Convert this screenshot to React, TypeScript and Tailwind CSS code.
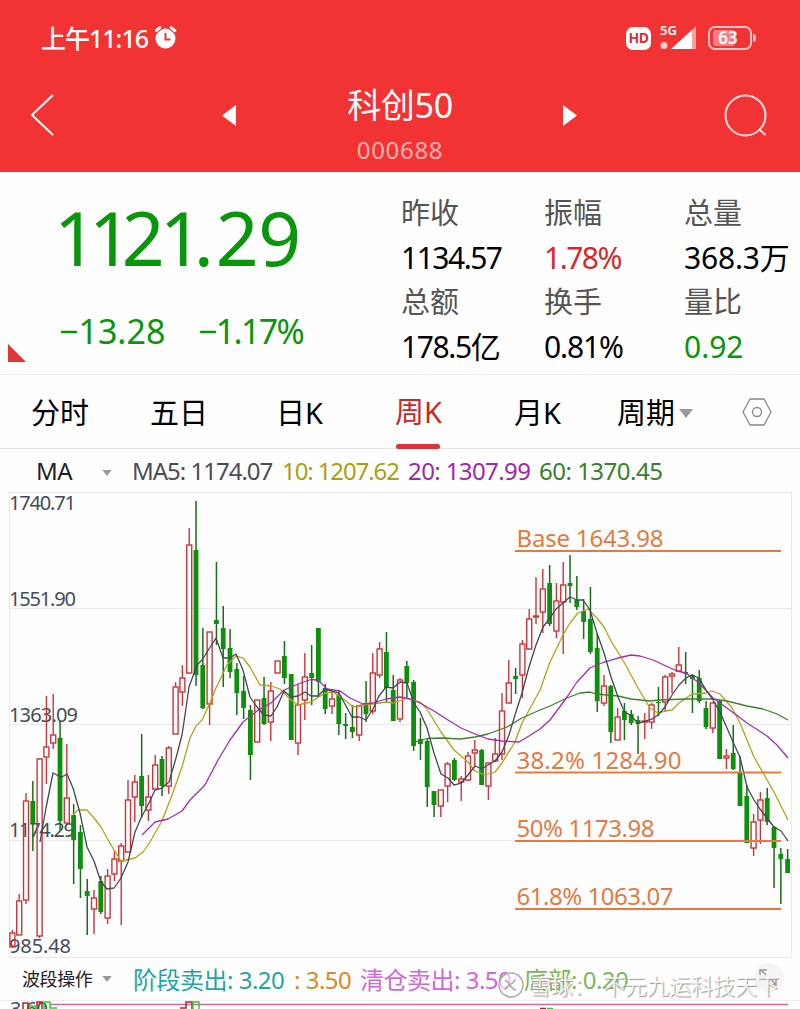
import React from "react";

type Candle = [kind: "r" | "g", high: number, top: number, bottom: number, low: number];

const STEP = 6.8;
const START_X = 12.4;

const candles: Candle[] = [
  ["r", 930, 933, 947, 947],
  ["r", 894, 901, 935, 935],
  ["r", 793, 801, 900, 904],
  ["g", 781, 801, 823, 851],
  ["r", 758, 759, 936, 938],
  ["r", 696, 747, 757, 784],
  ["r", 694, 735, 743, 749],
  ["g", 721, 738, 821, 831],
  ["r", 744, 798, 823, 823],
  ["g", 804, 815, 840, 884],
  ["g", 825, 832, 869, 898],
  ["g", 879, 891, 896, 935],
  ["r", 890, 898, 909, 934],
  ["g", 876, 881, 912, 914],
  ["r", 869, 876, 918, 924],
  ["r", 851, 859, 874, 881],
  ["r", 843, 846, 861, 925],
  ["r", 780, 800, 852, 852],
  ["r", 775, 782, 797, 822],
  ["g", 734, 776, 806, 818],
  ["r", 775, 797, 810, 821],
  ["r", 755, 765, 789, 789],
  ["g", 756, 759, 786, 796],
  ["r", 746, 748, 786, 794],
  ["r", 682, 687, 734, 734],
  ["r", 665, 678, 692, 706],
  ["r", 528, 545, 673, 673],
  ["g", 501, 550, 675, 686],
  ["g", 628, 665, 708, 709],
  ["r", 632, 632, 704, 725],
  ["g", 562, 620, 624, 645],
  ["g", 606, 628, 649, 687],
  ["g", 629, 648, 672, 678],
  ["g", 663, 669, 693, 715],
  ["g", 676, 691, 708, 719],
  ["g", 705, 710, 755, 780],
  ["r", 700, 700, 742, 742],
  ["g", 677, 698, 724, 725],
  ["r", 682, 691, 722, 741],
  ["r", 661, 661, 673, 673],
  ["g", 641, 656, 678, 684],
  ["g", 674, 674, 740, 740],
  ["r", 684, 705, 743, 755],
  ["r", 653, 677, 700, 720],
  ["g", 645, 673, 678, 705],
  ["g", 628, 628, 682, 697],
  ["g", 684, 688, 709, 714],
  ["r", 692, 699, 706, 714],
  ["g", 690, 695, 724, 735],
  ["g", 713, 724, 726, 739],
  ["g", 705, 727, 732, 738],
  ["r", 705, 706, 735, 741],
  ["g", 681, 703, 714, 722],
  ["r", 653, 673, 711, 714],
  ["r", 642, 649, 675, 678],
  ["g", 632, 652, 688, 702],
  ["g", 675, 690, 721, 721],
  ["r", 678, 680, 719, 722],
  ["g", 661, 666, 683, 698],
  ["g", 680, 682, 746, 751],
  ["g", 718, 739, 744, 760],
  ["g", 739, 741, 787, 807],
  ["g", 791, 791, 805, 817],
  ["r", 790, 790, 806, 817],
  ["r", 762, 764, 786, 802],
  ["g", 758, 760, 780, 781],
  ["r", 776, 779, 782, 801],
  ["r", 752, 756, 780, 781],
  ["r", 740, 750, 753, 766],
  ["g", 749, 750, 785, 785],
  ["r", 763, 763, 786, 800],
  ["r", 738, 754, 761, 762],
  ["r", 693, 711, 754, 760],
  ["r", 660, 683, 703, 703],
  ["g", 668, 676, 679, 694],
  ["r", 640, 644, 675, 698],
  ["r", 609, 619, 649, 650],
  ["r", 577, 616, 617, 624],
  ["r", 569, 589, 612, 633],
  ["g", 565, 583, 624, 626],
  ["r", 583, 601, 631, 638],
  ["r", 562, 585, 602, 654],
  ["g", 555, 583, 586, 603],
  ["g", 576, 600, 607, 610],
  ["g", 599, 611, 622, 639],
  ["g", 587, 619, 652, 654],
  ["g", 633, 648, 701, 712],
  ["r", 675, 686, 703, 706],
  ["g", 685, 686, 732, 743],
  ["r", 708, 717, 740, 740],
  ["g", 703, 711, 720, 740],
  ["g", 710, 714, 723, 725],
  ["g", 716, 720, 724, 754],
  ["r", 713, 721, 722, 739],
  ["r", 703, 705, 722, 729],
  ["g", 687, 702, 703, 716],
  ["r", 675, 677, 702, 712],
  ["r", 672, 674, 676, 693],
  ["r", 647, 665, 671, 671],
  ["g", 652, 672, 674, 684],
  ["g", 674, 675, 679, 713],
  ["g", 670, 678, 701, 703],
  ["g", 701, 708, 727, 729],
  ["r", 702, 703, 728, 733],
  ["g", 700, 701, 759, 759],
  ["r", 749, 756, 758, 769],
  ["g", 725, 753, 769, 770],
  ["g", 756, 772, 806, 806],
  ["g", 785, 796, 843, 843],
  ["r", 814, 822, 848, 856],
  ["r", 792, 800, 820, 844],
  ["g", 788, 798, 822, 825],
  ["g", 826, 827, 848, 888],
  ["g", 848, 854, 859, 904],
  ["g", 849, 859, 873, 873],
];

const averages = [
  {
    color: "#b4a21c",
    points:
      "73,815 78,810 87,810 94,818 101,827 107,838 114,850 121,861 135,858 143,852 150,842 162,821 172,795 182,767 190,738 196,726 202,720 209,705 216,688 227,665 236,656 243,658 250,667 260,685 271,686 280,689 291,700 298,705 311,702 325,693 333,692 345,700 353,707 360,705 373,704 386,702 393,703 407,698 420,702 427,709 441,732 454,750 468,762 475,771 485,775 495,772 502,763 515,742 522,723 540,690 550,662 563,635 570,623 578,613 588,609 597,618 604,627 611,641 624,662 638,688 650,708 658,713 665,711 672,710 679,703 692,694 706,693 712,691 720,694 732,708 740,723 754,757 774,792 788,820",
  },
  {
    color: "#3c8030",
    points:
      "415,742 427,738.5 443,738 460,739 475,737 488,734 507,727 522,718 540,710 550,706 567,698 580,693 590,692 597,694 618,696 631,699 650,701 660,700 686,699 713,699 727,701 747,706 763,709 777,714 788,720",
  },
  {
    color: "#a92bb0",
    points:
      "142,835 155,822 168,819 182,811 190,800 200,790 205,785 218,760 230,740 243,722 257,711 271,703 284,690 298,684 311,679.5 318,680 327,689 340,691 350,698 363,704 373,703 386,699 400,697 410,699 420,703 434,711 448,720 461,728 475,734 488,739 502,741 519,742 529,736 540,729 550,720 556,712 567,697 577,682 590,668 604,662 618,658 631,655 640,656 653,660 677,671 686,673 699,683 713,698 727,708 747,723 767,736 777,745 788,758",
  },
  {
    color: "#414957",
    points:
      "40,842 46,808 53,773 56,774.5 61,777.5 67,774 73,788 80,813 87,847 94,861 101,882 107,889 114,888 121,878 128,862 135,832 141,818 148,805 155,790 162,788 169,782 176,758 182,735 185,715 189,687 197,665 202,660 216,638 223,658 230,658 236,654 243,670 250,697 257,707 264,715 271,716 277,707 284,691 291,697 298,696 305,692 311,696 318,696 325,689 339,693 352,717 359,717 366,720 373,709 379,696 386,687 393,688 400,682 407,683 414,703 420,712 427,728 434,753 441,774 448,778 454,785 461,783 468,775 475,766 482,769 488,765 495,761 502,752 509,735 515,715 522,693 529,667 536,645 543,627 550,618 556,609 570,597 577,600 583,600 590,610 597,633 604,653 611,677 618,697 624,711 631,716 638,723 652,719 658,715 665,707 672,695 679,685 686,678 692,675 699,678 706,690 713,700 720,712 727,728 733,742 740,757 747,787 754,800 760,809 767,818 774,827 781,831 788,841",
  },
];

const axisLabels = [
  { y: 510, text: "1740.71", width: 67 },
  { y: 606, text: "1551.90", width: 67 },
  { y: 722, text: "1363.09", width: 69 },
  { y: 837, text: "1174.29", width: 66 },
  { y: 953, text: "985.48", width: 62 },
];

const levels = [
  { y: 551, text: "Base 1643.98", width: 147 },
  { y: 772.5, text: "38.2% 1284.90", width: 165 },
  { y: 841, text: "50% 1173.98", width: 138 },
  { y: 909, text: "61.8% 1063.07", width: 157 },
];

const StatusBar: React.FC = () => (
  <div className="flex h-[76px] items-center pl-[41px]">
    <span className="w-[114px] text-[25px] font-medium leading-[78px] tracking-[-1px] whitespace-nowrap">
      上午11:16
    </span>
    <svg width="22" height="24" viewBox="0 0 22 24" fill="none">
      <circle cx="10.5" cy="12.5" r="10" fill="#fff" />
      <path d="M0 7 6.5 1.5M14.5 1.5 21 7" stroke="#f23334" strokeWidth="3" />
      <path d="M1.2 4.6 4.8 1.6M16.2 1.6l3.6 3" stroke="#fff" strokeWidth="3" strokeLinecap="round" />
      <path d="M10.5 7v6.5h5" stroke="#f23334" strokeWidth="2" />
    </svg>
    <div className="ml-auto flex items-center pr-[44px]">
      <span className="flex h-[23px] w-[25px] items-center justify-center rounded-[7px] bg-white text-[14px] font-bold leading-none tracking-[-0.5px] text-[#d93030]">
        HD
      </span>
      <div className="relative ml-[9px] h-[28px] w-[38px]">
        <span className="absolute left-0 top-0 text-[13px] font-semibold leading-[13px]">5G</span>
        <svg className="h-full w-full" viewBox="0 0 38 28">
          <path d="M11 25 33 5v20z" fill="#fff" />
          <path d="M32 6 36 2v23h-4z" fill="#f9a0a0" />
          <circle cx="4" cy="21.5" r="3.5" fill="#fcc" />
        </svg>
      </div>
      <div className="relative ml-[10px] flex h-[24px] w-[44px] items-center rounded-[7px] border-2 border-[#fbc4c4]">
        <span className="ml-[3px] h-[16px] w-[22px] rounded-[3px] bg-[#f98080]" />
        <span className="absolute inset-0 pr-1 text-center text-[17px] font-semibold leading-[20px]">63</span>
      </div>
      <span className="ml-px h-2 w-[3px] rounded-r bg-[#fbc4c4]" />
    </div>
  </div>
);

const Header: React.FC = () => (
  <header className="h-[172px] bg-[#f23334] text-white">
    <StatusBar />
    <div className="flex h-[96px] items-start">
      <svg className="ml-[29px] mt-[17px]" width="26" height="44" viewBox="0 0 26 44" fill="none">
        <path d="M24 2 3 22l21 20" stroke="#fff" strokeWidth="2" />
      </svg>
      <svg className="ml-[166px] mt-[29px]" width="16" height="21" viewBox="0 0 16 21">
        <path d="M15 0v21L1 10.5z" fill="#fff" />
      </svg>
      <div className="w-[326px] text-center">
        <h1 className="mt-2 text-[34px] leading-[42px] tracking-[-0.3px]">科创50</h1>
        <p className="mt-[5px] text-[24px] leading-[38px] tracking-[0.7px] text-[#fcb2ae]">000688</p>
      </div>
      <svg className="mt-[29px]" width="16" height="21" viewBox="0 0 16 21">
        <path d="M0 0v21l14-10.5z" fill="#fff" />
      </svg>
      <svg className="ml-[145px] mt-[18px]" width="44" height="44" viewBox="0 0 44 44" fill="none">
        <circle cx="21.5" cy="21.5" r="20" stroke="#fde0de" strokeWidth="2" />
        <path d="m35 35 6.5 6" stroke="#fde0de" strokeWidth="2" />
      </svg>
    </div>
  </header>
);

const Stat: React.FC<{ label: string; value: string; className?: string }> = ({
  label,
  value,
  className = "text-black",
}) => (
  <div className="whitespace-nowrap leading-[44.5px]">
    <div className="text-[29px] text-[#555]">{label}</div>
    <div className={`text-[30px] ${className}`}>{value}</div>
  </div>
);

const Quote: React.FC = () => (
  <section className="flex h-[203px] border-b border-[#eeeff2]">
    <div className="relative w-[400px] text-[#09960b]">
      <div className="mt-[27px] pl-[54px] text-[75px] leading-[76px] whitespace-nowrap">
        <span className="tracking-[-8px]">1</span>
        <span className="tracking-[-10px]">1</span>
        <span className="tracking-[-5px]">2</span>
        <span className="tracking-[-9px]">1</span>
        <span className="tracking-[2px]">.</span>
        <span className="tracking-[-0.5px]">29</span>
      </div>
      <div className="mt-[34px] flex pl-[59px] text-[34px] leading-[44px]">
        <span className="w-[139px]">−13.28</span>
        <span className="tracking-[-1.7px]">−1.17%</span>
      </div>
      <svg className="absolute left-2 top-[172px]" width="18" height="18" viewBox="0 0 18 18">
        <path d="M0 0v18h18z" fill="#e23434" />
      </svg>
    </div>
    <div className="grid grid-cols-[143px_140px_116px] content-start pl-px pt-[19px]">
      <Stat label="昨收" value="1134.57" className="tracking-[-1.5px] text-black" />
      <Stat label="振幅" value="1.78%" className="tracking-[-1.5px] text-[#d3292c]" />
      <Stat label="总量" value="368.3万" className="tracking-[-0.2px] text-black" />
      <Stat label="总额" value="178.5亿" className="tracking-[-1.4px] text-black" />
      <Stat label="换手" value="0.81%" className="tracking-[-1.1px] text-black" />
      <Stat label="量比" value="0.92" className="text-[#09960b]" />
    </div>
  </section>
);

const CaretDown: React.FC<{ className?: string }> = ({ className }) => (
  <svg className={className} viewBox="0 0 14 9" fill="#999">
    <path d="M0 0h14L7 9z" />
  </svg>
);

const Tabs: React.FC = () => (
  <nav className="flex h-[74px] items-center border-b border-[#e2e2e5] pl-[31px] text-[29px] leading-[74px] text-black">
    <span className="w-[119px] pt-[2px]">分时</span>
    <span className="w-[126px] pt-[2px]">五日</span>
    <span className="w-[119px] pt-[2px]">日K</span>
    <div className="relative w-[119px] pt-px text-[#c9282b]">
      周K
      <span className="absolute bottom-0 left-px h-[5px] w-[44px] rounded-sm bg-[#e03236]" />
    </div>
    <span className="w-[103px] pt-[2px]">月K</span>
    <span className="w-[62px] pt-[2px]">周期</span>
    <CaretDown className="mt-1 h-[9px] w-[14px]" />
    <svg className="ml-[48px]" width="32" height="28" viewBox="0 0 32 28" fill="none" stroke="#888" strokeWidth="1.3">
      <path d="M9 1h14l7 13-7 13H9L2 14z" strokeLinejoin="round" />
      <circle cx="16" cy="14" r="4.5" />
    </svg>
  </nav>
);

const Averages: React.FC = () => (
  <div className="flex h-[43px] items-center pl-[36px] text-[24px] leading-[50px] whitespace-nowrap">
    <span className="w-[66px] tracking-[-0.5px] text-[#222]">MA</span>
    <CaretDown className="mt-1 h-[6px] w-[10px]" />
    <span className="ml-5 w-[150px] tracking-[-1px] text-[#4a4c55]">MA5: 1174.07</span>
    <span className="w-[126px] tracking-[-1.1px] text-[#a8a013]">10: 1207.62</span>
    <span className="w-[131px] tracking-[-0.6px] text-[#a027a8]">20: 1307.99</span>
    <span className="tracking-[-0.5px] text-[#38802c]">60: 1370.45</span>
  </div>
);

const Chart: React.FC = () => (
  <svg className="block shrink-0" width="800" height="466" viewBox="0 492 800 466">
    <path
      d="M9 492.5h782M9 608.5h782M9 724.5h782M9 840.5h782M9 957.5h782M9.5 492v466M791.5 492v466"
      stroke="#e8e9ec"
      fill="none"
    />
    {axisLabels.map((label) => (
      <text key={label.text} x="9" y={label.y} fontSize="20" fill="#454c59" textLength={label.width}>
        {label.text}
      </text>
    ))}
    {candles.map(([kind, high, top, bottom, low], i) => {
      const x = START_X + i * STEP;
      if (kind === "g") {
        return (
          <g key={i} fill="#0c910c">
            <rect x={x - 0.7} y={high} width="1.5" height={low - high} fill="#166f16" />
            <rect x={x - 2.4} y={top} width="4.8" height={Math.max(bottom - top, 1)} />
          </g>
        );
      }
      return (
        <g key={i} stroke="#cf3438" strokeWidth="1.4" fill="none">
          <path d={`M${x} ${high}V${top}M${x} ${bottom}V${low}`} />
          <rect x={x - 2.5} y={top} width="5" height={bottom - top} />
        </g>
      );
    })}
    {averages.map((line) => (
      <polyline
        key={line.color}
        points={line.points}
        fill="none"
        stroke={line.color}
        strokeWidth="1.3"
        strokeLinejoin="round"
      />
    ))}
    {levels.map((level) => (
      <g key={level.text}>
        <path d={`M515 ${level.y}H781`} stroke="#e47a43" strokeWidth="2" />
        <text x="516.5" y={level.y - 4} fontSize="24" fill="#e47a43" textLength={level.width}>
          {level.text}
        </text>
      </g>
    ))}
  </svg>
);

const Indicator: React.FC = () => (
  <div className="relative flex h-[43px] items-center border-b border-[#eee] pl-[22px] text-[24px] leading-[43px] whitespace-nowrap">
    <span className="w-[80px] text-[18px] tracking-[-0.4px] text-[#222]">波段操作</span>
    <CaretDown className="h-[6px] w-[10px]" />
    <span className="ml-[21px] w-[161px] tracking-[-0.5px] text-[#1fa6a4]">阶段卖出: 3.20</span>
    <span className="w-[66px] tracking-[-0.5px] text-[#d98a1d]">: 3.50</span>
    <span className="w-[164px] tracking-[-0.5px] text-[#d367d6]">清仓卖出: 3.50</span>
    <span className="tracking-[-0.5px] text-[#7cb65a]">底部: 0.20</span>
    <svg className="absolute left-[753px] top-1" width="32" height="32" viewBox="0 0 32 32" fill="none" stroke="#999" strokeWidth="1.5">
      <circle cx="16" cy="16" r="15" fill="#f5f5f5" stroke="none" />
      <path d="M7 13V8h7M8 8l5 5M23 15v8h-7M22 22l-5-6" />
    </svg>
    <div className="absolute left-[497px] top-[6px] flex items-center text-[22px] leading-[42px] text-white/80 [text-shadow:1px_1px_1px_#999]">
      <svg className="mr-1" width="28" height="28" viewBox="0 0 28 28" fill="none" stroke="#aaa" strokeWidth="1.5">
        <circle cx="14" cy="14" r="12" fill="#ffffff99" />
        <path d="M8 9c4 1 5 9 11 10M18 8c0 5-9 6-10 11" />
      </svg>
      <span>雪球：</span>
      <span className="ml-2">不元九运科技天下</span>
    </div>
  </div>
);

const SubChart: React.FC = () => (
  <svg className="block" width="800" height="8" viewBox="0 1001 800 8" fill="none" strokeWidth="1.5">
    <text x="10" y="1016" fontSize="20" fill="#454c59" textLength="38">
      3.60
    </text>
    <path d="M50 1004.5h738" stroke="#c96ba4" />
    <path d="M23 1009v-6h5v6M37 1009v-7h5v7M180 1008h6v-6h6v7" stroke="#b5232b" />
    <path d="M30 1009v-3h6v3M44 1009v-7h6v6h7M193 1009v-7h6v7" stroke="#32cd32" />
    <path d="M540 1008.5h6" stroke="#b5232b" />
    <path d="M547 1008.5h6" stroke="#32cd32" />
  </svg>
);

const App: React.FC = () => {
  return (
    <main className="flex h-[1009px] w-[800px] flex-col overflow-hidden bg-[#fefefe] font-['Noto_Sans','Noto_Sans_CJK_SC',sans-serif]">
      <Header />
      <Quote />
      <Tabs />
      <Averages />
      <Chart />
      <Indicator />
      <SubChart />
    </main>
  );
};

export default App;
